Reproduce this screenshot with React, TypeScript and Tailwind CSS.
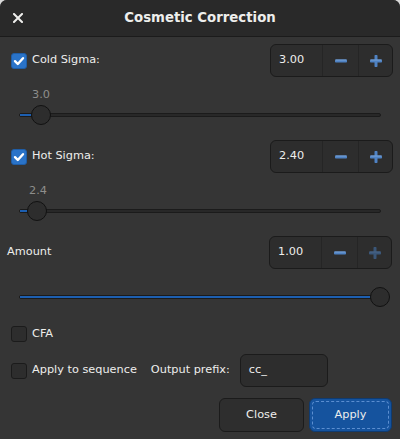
import React from "react";

const FONT = { fontFamily: '"DejaVu Sans", "Liberation Sans", sans-serif' };

function Check({ checked }: { checked: boolean }) {
  if (checked) {
    return (
      <div className="w-[16px] h-[16px] rounded-[3px] bg-[#2a73c8] border border-[#1f5da6] flex items-center justify-center shrink-0">
        <svg width="12" height="12" viewBox="0 0 12 12">
          <path d="M2 6.2 L4.8 9 L10 3.2" stroke="#ffffff" strokeWidth="2.4" fill="none" strokeLinecap="round" strokeLinejoin="round" />
        </svg>
      </div>
    );
  }
  return <div className="w-[16px] h-[16px] rounded-[3px] bg-[#2d2d2d] border border-[#1b1b1b] shrink-0" />;
}

function Minus() {
  return (
    <svg width="12" height="12" viewBox="0 0 12 12">
      <rect x="0" y="4.5" width="12" height="3" rx="0.8" fill="#4f82c3" />
      <rect x="0.5" y="4.5" width="11" height="1" fill="#7aa3d8" />
    </svg>
  );
}

function Plus({ dim }: { dim?: boolean }) {
  const c = dim ? "#3a5678" : "#4f82c3";
  const h = dim ? "#4a6688" : "#7aa3d8";
  return (
    <svg width="12" height="12" viewBox="0 0 12 12">
      <rect x="0" y="4.5" width="12" height="3" rx="0.8" fill={c} />
      <rect x="4.5" y="0" width="3" height="12" rx="0.8" fill={c} />
      <rect x="0.5" y="4.5" width="11" height="1" fill={h} />
    </svg>
  );
}

function Spin({ value, plusDim }: { value: string; plusDim?: boolean }) {
  return (
    <div className="w-[123px] h-[33px] flex rounded-[6px] border border-[#1b1b1b] bg-[#2d2d2d] shrink-0">
      <div className="w-[51px] flex items-center pl-[8px] text-[#eeeeec]">{value}</div>
      <div className="w-[36px] flex items-center justify-center border-l border-[#252525]">
        <Minus />
      </div>
      <div className="flex-1 flex items-center justify-center border-l border-[#252525]">
        <Plus dim={plusDim} />
      </div>
    </div>
  );
}

function Track({ pos, fill }: { pos: number; fill: number }) {
  return (
    <div className="relative h-[20px] w-[362px]">
      <div className="absolute left-0 right-0 top-[8px] h-[4px] rounded-full bg-[#282828] border border-[#1b1b1b]" />
      <div className="absolute left-[1px] top-[9px] h-[2px] bg-[#1d5fb0]" style={{ width: fill }} />
      <div
        className="absolute top-0 w-[20px] h-[20px] rounded-full bg-[#2d2d2d] border border-[#111111]"
        style={{ left: pos - 10 }}
      />
    </div>
  );
}

export default function App() {
  return (
    <div className="w-[400px] h-[439px] bg-[#d8d8d8] text-[11.3px] text-[#eeeeec]" style={FONT}>
      <div className="flex flex-col h-full rounded-t-[7px] overflow-hidden bg-[#353535]">
        <div className="relative h-[37px] shrink-0 bg-[#292929] border-b border-[#1b1b1b] flex items-center justify-center">
          <div className="absolute left-[13px] top-[13px] w-[10px] h-[10px]">
            <svg width="10" height="10" viewBox="0 0 10 10">
              <path d="M1 1 L9 9 M9 1 L1 9" stroke="#eeeeec" strokeWidth="2" strokeLinecap="square" />
            </svg>
          </div>
          <span className="font-bold text-[13.3px] text-[#eeeeec]">Cosmetic Correction</span>
        </div>

        <div className="flex flex-col px-[7px] pt-[7px]">
          <div className="flex items-center justify-between h-[33px]">
            <div className="flex items-center gap-[5px] pl-[4px]">
              <Check checked />
              <span>Cold Sigma:</span>
            </div>
            <Spin value="3.00" />
          </div>
          <div className="flex flex-col pl-[12px] mb-[15px]">
            <div className="mt-[11px] h-[13px] leading-[13px] pl-[13px] text-[#8e8e8c]">3.0</div>
            <div className="mt-[4px]">
              <Track pos={22} fill={12} />
            </div>
          </div>

          <div className="flex items-center justify-between h-[33px]">
            <div className="flex items-center gap-[5px] pl-[4px]">
              <Check checked />
              <span>Hot Sigma:</span>
            </div>
            <Spin value="2.40" />
          </div>
          <div className="flex flex-col pl-[12px] mb-[15px]">
            <div className="mt-[11px] h-[13px] leading-[13px] pl-[10px] text-[#8e8e8c]">2.4</div>
            <div className="mt-[4px]">
              <Track pos={18} fill={8} />
            </div>
          </div>

          <div className="flex items-center justify-between h-[33px] pr-[1px]">
            <span>Amount</span>
            <Spin value="1.00" plusDim />
          </div>
          <div className="pl-[12px] mt-[18px]">
            <Track pos={361} fill={355} />
          </div>

          <div className="flex items-center gap-[5px] pl-[4px] mt-[19px] h-[16px]">
            <Check checked={false} />
            <span>CFA</span>
          </div>

          <div className="flex items-center mt-[12px] h-[33px]">
            <div className="flex items-center gap-[5px] pl-[4px]">
              <Check checked={false} />
              <span>Apply to sequence</span>
            </div>
            <span className="ml-[14px]">Output prefix:</span>
            <div className="ml-[10px] w-[88px] h-[33px] rounded-[6px] border border-[#1b1b1b] bg-[#2d2d2d] flex items-center pl-[8px]">
              cc_
            </div>
          </div>

          <div className="flex justify-end gap-[5px] mt-[11px] pr-[1px]">
            <div className="w-[85px] h-[34px] rounded-[6px] border border-[#1b1b1b] bg-[#2e2e2e] flex items-center justify-center">
              Close
            </div>
            <div className="w-[83px] h-[34px] rounded-[6px] border border-[#0f3b71] bg-[#15539e] p-[2px]">
              <div className="w-full h-full rounded-[4px] border border-dashed border-[#5b8ed0] flex items-center justify-center">
                Apply
              </div>
            </div>
          </div>
        </div>
      </div>
    </div>
  );
}
